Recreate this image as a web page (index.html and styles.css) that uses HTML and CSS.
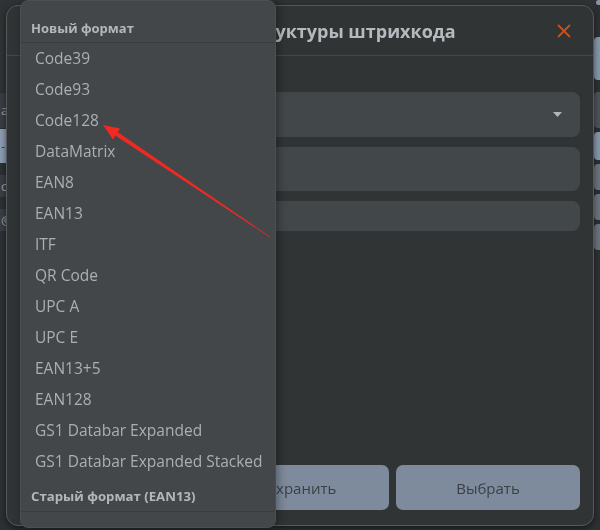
FILE: index.html
```
<!DOCTYPE html>
<html>
<head lang="ru">
    <meta charset="UTF-8">
    <title>Выбор структуры штрихкода</title>
    <link rel="stylesheet" href="styles.css">
</head>
<body>
<div class="page">
    <div class="page-main">
        <div class="row row-top"></div>
        <div class="row row-gray">a</div>
        <div class="row row-blue">-</div>
        <div class="row row-gray row-small">c</div>
        <div class="row row-gray row-small">@</div>
    </div>
    <div class="page-side">
        <div class="side-btn side-top"></div>
        <div class="side-btn side-light"></div>
        <div class="side-btn side-dark"></div>
        <div class="side-btn side-light side-short"></div>
        <div class="side-btn side-icon"></div>
        <div class="side-btn side-icon"></div>
        <div class="side-btn side-icon"></div>
    </div>
</div>

<div class="modal">
    <div class="modal-head">
        <div class="modal-title">Выбор структуры штрихкода</div>
        <svg class="modal-close" width="16" height="16" viewBox="0 0 16 16">
            <path d="M2 2 L14 14 M14 2 L2 14" stroke="#c8511d" stroke-width="1.8" fill="none"/>
        </svg>
    </div>
    <div class="modal-body">
        <div class="field field-select">
            <svg class="select-arrow" width="9" height="5" viewBox="0 0 9 5">
                <path d="M0 0 L9 0 L4.5 5 Z" fill="#b3b7bb"/>
            </svg>
        </div>
        <div class="field field-big"></div>
        <div class="field field-small"></div>
        <div class="buttons">
            <div class="btn"></div>
            <div class="btn">Сохранить</div>
            <div class="btn">Выбрать</div>
        </div>
    </div>
</div>

<div class="dropdown">
    <div class="group">Новый формат</div>
    <ul class="options">
        <li>Code39</li>
        <li>Code93</li>
        <li>Code128</li>
        <li>DataMatrix</li>
        <li>EAN8</li>
        <li>EAN13</li>
        <li>ITF</li>
        <li>QR Code</li>
        <li>UPC A</li>
        <li>UPC E</li>
        <li>EAN13+5</li>
        <li>EAN128</li>
        <li>GS1 Databar Expanded</li>
        <li>GS1 Databar Expanded Stacked</li>
    </ul>
    <div class="group group-old">Старый формат (EAN13)</div>
</div>

<svg class="pointer" width="600" height="530" viewBox="0 0 600 530">
    <polygon points="103,125 120,128.5 113,139.5" fill="#ee2a22"/>
    <polygon points="115.2,135.6 117.6,132 270.2,236.8 269.8,237.2" fill="#ee2a22"/>
</svg>
</body>
</html>
```

FILE: styles.css
```
*{
    margin: 0;
    padding: 0;
    list-style: none;
    box-sizing: border-box;
}
html,body{
    width: 100%;
    height: 100%;
    overflow: hidden;
}
body{
    background: #2c3032;
    font-family: "Open Sans", "Noto Sans", sans-serif;
    color: #a9adb1;
}
.page{
    display: flex;
    height: 100%;
}
.page-main{
    flex: 1;
}
.row{
    height: 35px;
    margin-bottom: 1px;
    font-size: 13px;
    line-height: 35px;
    color: #9aa0a6;
    padding-left: 1px;
}
.row-top{
    height: 92px;
    background: #2f3335;
}
.row-gray{
    background: #3b3f42;
}
.row-blue{
    height: 34px;
    background: #8c9db2;
    color: #40464c;
}
.row-small{
    height: 22px;
    line-height: 22px;
    margin-top: 12px;
    margin-bottom: 0;
}
.page-side{
    width: 6px;
    display: flex;
    flex-direction: column;
    gap: 4px;
}
.side-btn{
    height: 30px;
    border-radius: 4px 0 0 4px;
}
.side-top{
    height: 5px;
    margin-bottom: 28px;
    background: #8694a6;
    margin-left: 2px;
}
.side-light{
    height: 43px;
    background: #8797ab;
}
.side-dark{
    height: 36px;
    margin-top: 8px;
    background: #4e5357;
}
.side-short{
    height: 28px;
}
.side-icon{
    height: 26px;
    background: #6b747e;
}

.modal{
    position: fixed;
    left: 6px;
    top: 5px;
    width: 588px;
    height: 521px;
    background: #303435;
    border: 1px solid #55595d;
    border-radius: 12px;
    box-shadow: 0 2px 6px rgba(0,0,0,0.5);
    display: flex;
    flex-direction: column;
}
.modal-head{
    height: 50px;
    border-bottom: 1px solid #44484b;
    display: flex;
    align-items: center;
    padding: 0 21px 0 16px;
}
.modal-title{
    flex: 1;
    padding-left: 156px;
    font-size: 18px;
    font-weight: bold;
    color: #b6babe;
}
.modal-close{
    display: block;
}
.modal-body{
    flex: 1;
    display: flex;
    flex-direction: column;
    gap: 10px;
    padding: 36px 13px 15px 13px;
}
.field{
    background: #42474a;
    border-radius: 8px;
    height: 45px;
}
.field-select{
    display: flex;
    align-items: center;
    justify-content: flex-end;
    padding-right: 18px;
}
.select-arrow{
    display: block;
}
.field-big{
    height: 44px;
}
.field-small{
    height: 30px;
}
.buttons{
    margin-top: auto;
    display: grid;
    grid-template-columns: 1fr 184px 184px;
    gap: 7px;
    padding-left: 14px;
}
.btn{
    height: 45px;
    background: #7e8b9c;
    border-radius: 7px;
    color: #3a3f45;
    font-size: 15px;
    display: flex;
    align-items: center;
    justify-content: center;
}

.dropdown{
    position: absolute;
    left: 20px;
    top: 0;
    width: 256px;
    height: 528px;
    background: #434749;
    border: 1px solid #4b4f52;
    border-radius: 8px;
    box-shadow: 2px 0 10px rgba(0,0,0,0.35);
    overflow: hidden;
}
.group{
    padding: 18px 10px 5px;
    line-height: 18px;
    font-size: 13px;
    font-weight: bold;
    color: #b3b7bb;
    border-bottom: 1px solid #393d40;
}
.group-old{
    padding: 10px 10px 6px;
    font-size: 13.2px;
}
.options li{
    height: 31px;
    line-height: 31px;
    padding-left: 14px;
    font-size: 15.5px;
    color: #abafb3;
    white-space: nowrap;
}
.pointer{
    position: absolute;
    left: 0;
    top: 0;
    pointer-events: none;
}
```
